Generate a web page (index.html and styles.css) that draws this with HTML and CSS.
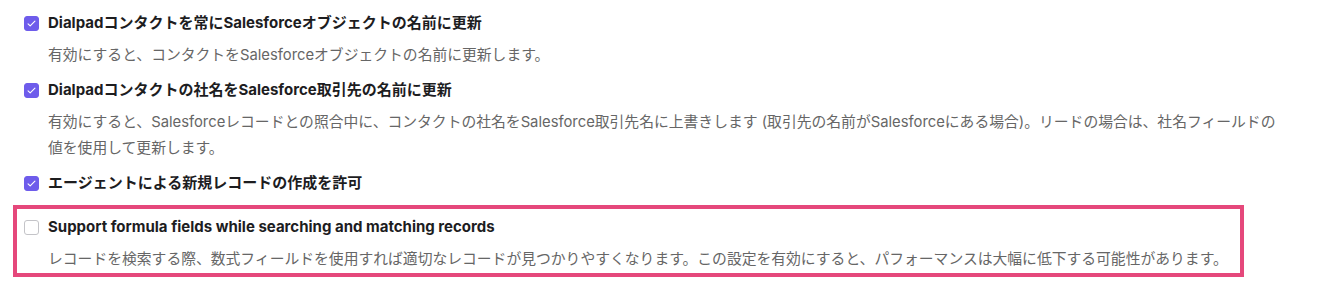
FILE: index.html
```html
<!DOCTYPE html>
<html lang="ja">
<head>
  <meta charset="UTF-8">
  <meta name="viewport" content="width=device-width, initial-scale=1.0">
  <title>Salesforce 設定</title>
  <link rel="stylesheet" href="styles.css">
</head>
<body>
  <div class="settings">
    <!-- Contact name sync -->
    <div class="option">
      <label class="option-title">
        <span class="check checked">
          <svg viewBox="0 0 16 16" width="11" height="11"><path d="M3 8.4l3.1 3L13 4.6" fill="none" stroke="#fff" stroke-width="1.6" stroke-linecap="round" stroke-linejoin="round"/></svg>
        </span>
        Dialpadコンタクトを常にSalesforceオブジェクトの名前に更新
      </label>
      <p class="option-desc">有効にすると、コンタクトをSalesforceオブジェクトの名前に更新します。</p>
    </div>

    <!-- Company name sync -->
    <div class="option">
      <label class="option-title">
        <span class="check checked">
          <svg viewBox="0 0 16 16" width="11" height="11"><path d="M3 8.4l3.1 3L13 4.6" fill="none" stroke="#fff" stroke-width="1.6" stroke-linecap="round" stroke-linejoin="round"/></svg>
        </span>
        Dialpadコンタクトの社名をSalesforce取引先の名前に更新
      </label>
      <p class="option-desc">有効にすると、Salesforceレコードとの照合中に、コンタクトの社名をSalesforce取引先名に上書きします (取引先の名前がSalesforceにある場合)。リードの場合は、社名フィールドの値を使用して更新します。</p>
    </div>

    <!-- Agent record creation -->
    <div class="option">
      <label class="option-title">
        <span class="check checked">
          <svg viewBox="0 0 16 16" width="11" height="11"><path d="M3 8.4l3.1 3L13 4.6" fill="none" stroke="#fff" stroke-width="1.6" stroke-linecap="round" stroke-linejoin="round"/></svg>
        </span>
        エージェントによる新規レコードの作成を許可
      </label>
    </div>

    <!-- Formula fields (highlighted) -->
    <div class="option highlight">
      <label class="option-title">
        <span class="check"></span>
        Support formula fields while searching and matching records
      </label>
      <p class="option-desc">レコードを検索する際、数式フィールドを使用すれば適切なレコードが見つかりやすくなります。この設定を有効にすると、パフォーマンスは大幅に低下する可能性があります。</p>
    </div>
  </div>
</body>
</html>
```

FILE: styles.css
```css
body {
  margin: 0;
  padding: 0;
  background-color: #fff;
  font-family: Inter, "Noto Sans CJK JP", sans-serif;
  color: #1d1d1f;
}
.settings {
  padding: 12px 0 0 13px;
}
.option {
  padding-left: 11px;
  margin-bottom: 11px;
  width: 1272px;
  box-sizing: border-box;
}
.option-title {
  display: flex;
  align-items: center;
  gap: 9px;
  font-size: 15px;
  font-weight: 700;
  line-height: 22px;
  height: 22px;
}
.check {
  flex: none;
  width: 15px;
  height: 15px;
  border-radius: 3px;
  box-sizing: border-box;
  border: 1px solid #c4c4c8;
  background-color: #fff;
  display: flex;
  align-items: center;
  justify-content: center;
}
.check.checked {
  background-color: #6e5ceb;
  border-color: #6e5ceb;
}
.option-desc {
  margin: 8px 0 0 24px;
  font-size: 14.8px;
  line-height: 26px;
  color: #666;
}
.highlight {
  width: 1231px;
  border: 4px solid #e5487b;
  padding: 7px 0 1px 7px;
}
```
